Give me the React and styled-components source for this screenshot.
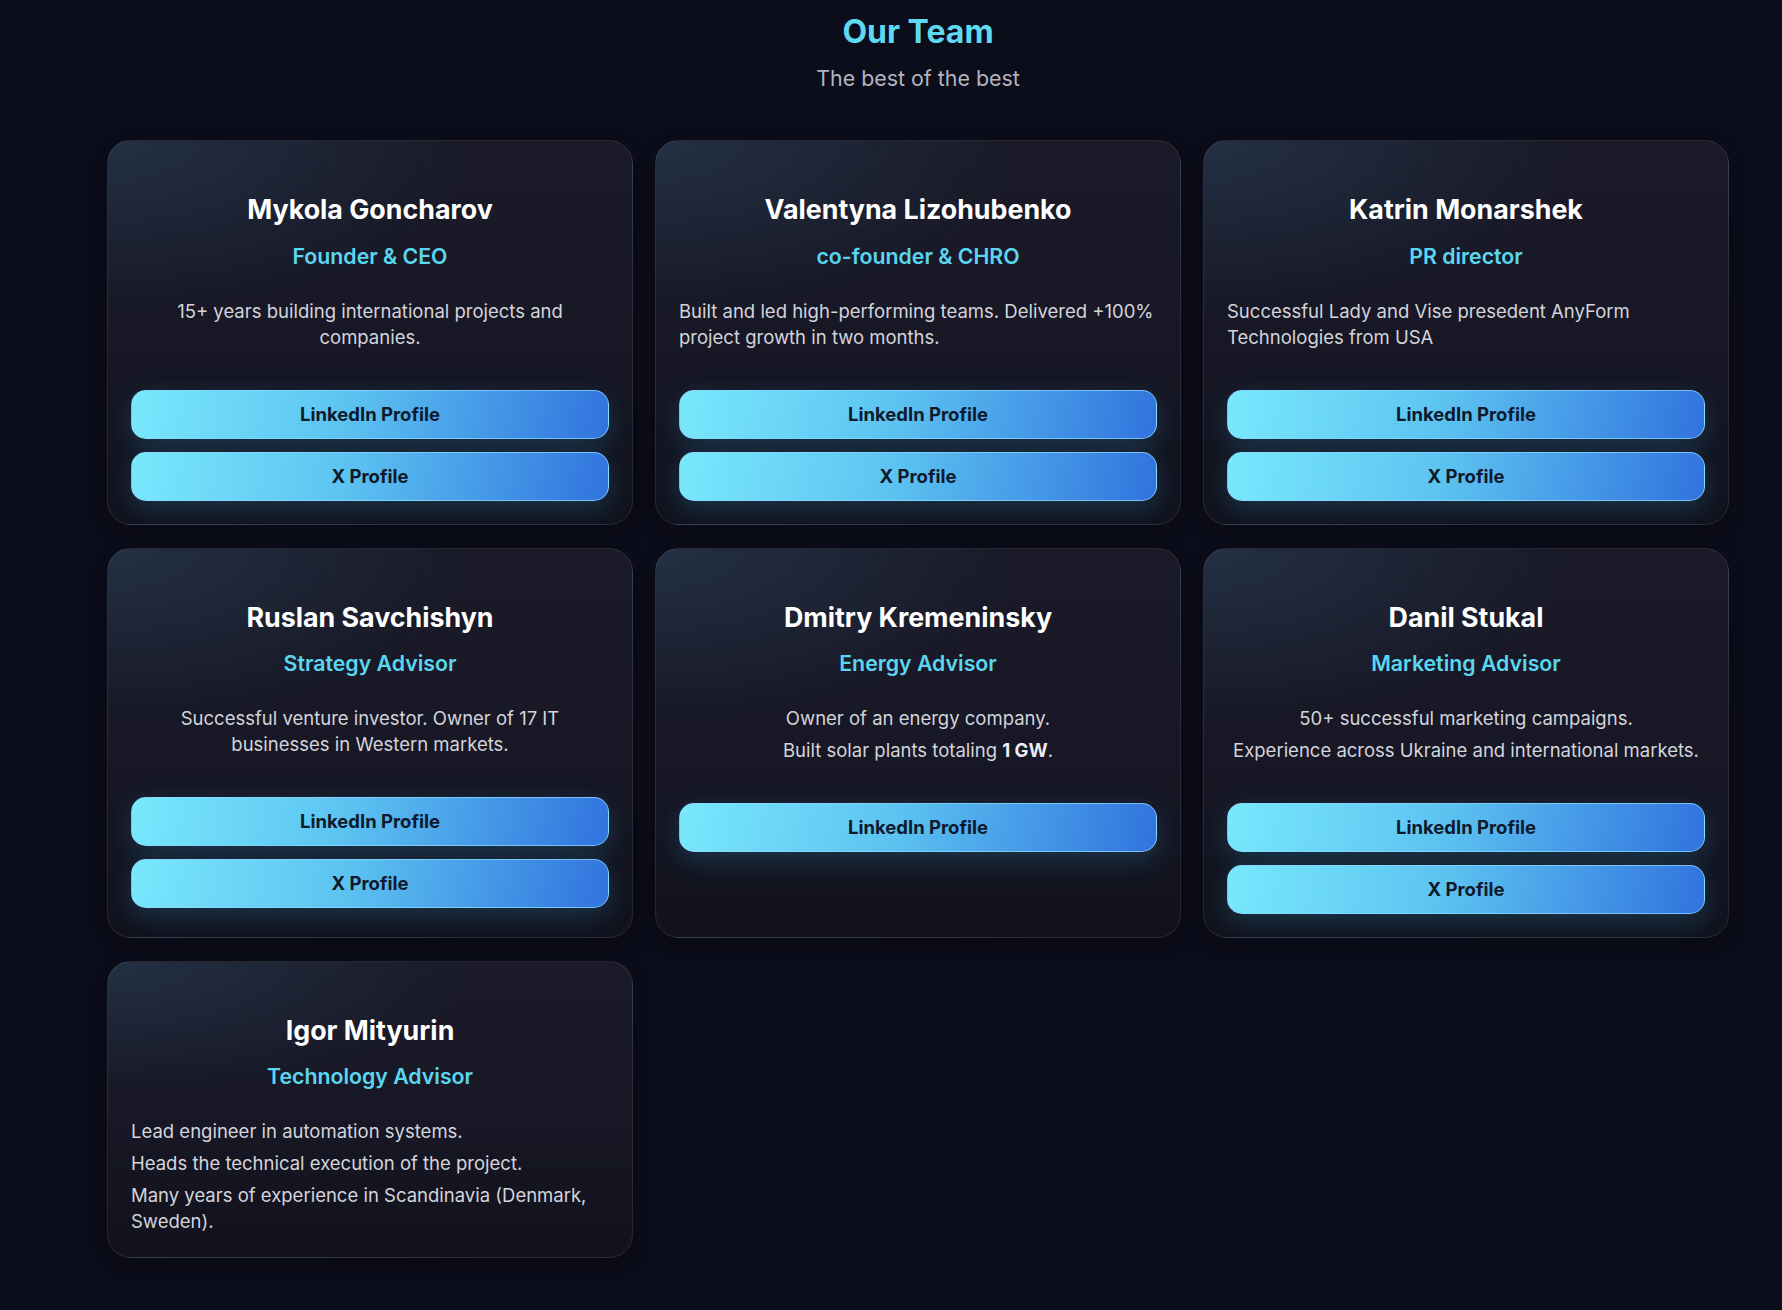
import React from "react";
import styled, { createGlobalStyle } from "styled-components";

const team = [
  {
    name: "Mykola Goncharov",
    role: "Founder & CEO",
    align: "center",
    about: ["15+ years building international projects and companies."],
    links: ["LinkedIn Profile", "X Profile"],
  },
  {
    name: "Valentyna Lizohubenko",
    role: "co-founder & CHRO",
    align: "left",
    about: [
      "Built and led high-performing teams. Delivered +100% project growth in two months.",
    ],
    links: ["LinkedIn Profile", "X Profile"],
  },
  {
    name: "Katrin Monarshek",
    role: "PR director",
    align: "left",
    about: ["Successful Lady and Vise presedent AnyForm Technologies from USA"],
    links: ["LinkedIn Profile", "X Profile"],
  },
  {
    name: "Ruslan Savchishyn",
    role: "Strategy Advisor",
    align: "center",
    about: [
      "Successful venture investor. Owner of 17 IT businesses in Western markets.",
    ],
    links: ["LinkedIn Profile", "X Profile"],
  },
  {
    name: "Dmitry Kremeninsky",
    role: "Energy Advisor",
    align: "center",
    about: [
      "Owner of an energy company.",
      <>
        Built solar plants totaling <b>1 GW</b>.
      </>,
    ],
    links: ["LinkedIn Profile"],
  },
  {
    name: "Danil Stukal",
    role: "Marketing Advisor",
    align: "center",
    about: [
      "50+ successful marketing campaigns.",
      "Experience across Ukraine and international markets.",
    ],
    links: ["LinkedIn Profile", "X Profile"],
  },
  {
    name: "Igor Mityurin",
    role: "Technology Advisor",
    align: "left",
    about: [
      "Lead engineer in automation systems.",
      "Heads the technical execution of the project.",
      "Many years of experience in Scandinavia (Denmark, Sweden).",
    ],
    links: [],
  },
];

const App = () => {
  return (
    <>
      <GlobalStyle />
      <Page>
        <Header>
          <Title>Our Team</Title>
          <Subtitle>The best of the best</Subtitle>
        </Header>
        <Grid>
          {team.map((member) => (
            <Card key={member.name}>
              <Name>{member.name}</Name>
              <Role>{member.role}</Role>
              <About $align={member.align}>
                {member.about.map((line, i) => (
                  <p key={i}>{line}</p>
                ))}
              </About>
              {member.links.length > 0 && (
                <Buttons>
                  {member.links.map((label) => (
                    <ProfileButton key={label} href="#">
                      {label}
                    </ProfileButton>
                  ))}
                </Buttons>
              )}
            </Card>
          ))}
        </Grid>
      </Page>
    </>
  );
};

export default App;

const GlobalStyle = createGlobalStyle`
  * {
    box-sizing: border-box;
  }
  body {
    margin: 0;
    background: #0c0d1a;
    font-family: Inter, "Noto Sans", sans-serif;
    color: #fff;
  }
`;

const Page = styled.div`
  min-height: 1310px;
  padding: 13px 0 40px 54px;
  display: flex;
  flex-direction: column;
  align-items: center;
`;

const Header = styled.header`
  text-align: center;
  margin-bottom: 46px;
`;

const Title = styled.h1`
  margin: 0;
  font-size: 32px;
  line-height: 1.2;
  font-weight: 700;
  color: #5fd9f2;
`;

const Subtitle = styled.p`
  margin: 13px 0 0;
  font-size: 21.4px;
  line-height: 1.4;
  color: #b3b3bf;
`;

const Grid = styled.div`
  width: 1622px;
  display: grid;
  grid-template-columns: repeat(3, 1fr);
  column-gap: 22px;
  row-gap: 23px;
  align-items: stretch;
`;

const Card = styled.div`
  display: flex;
  flex-direction: column;
  padding: 52px 23px 23px;
  border-radius: 24px;
  border: 1px solid rgba(255, 255, 255, 0.09);
  background:
    radial-gradient(
      ellipse 70% 45% at 0% 0%,
      rgba(45, 75, 100, 0.45),
      rgba(45, 75, 100, 0) 100%
    ),
    linear-gradient(180deg, #1a1a28 0%, #171725 55%, #11121d 100%);
  box-shadow: 0 6px 20px rgba(0, 0, 0, 0.25);
`;

const Name = styled.h3`
  margin: 0;
  text-align: center;
  font-size: 26.8px;
  line-height: 1.2;
  font-weight: 700;
  color: #ffffff;
`;

const Role = styled.div`
  margin-top: 17px;
  text-align: center;
  font-size: 21.3px;
  line-height: 26px;
  font-weight: 600;
  color: #5ad6f0;
`;

const About = styled.div`
  margin-top: 29px;
  text-align: ${(props) => props.$align};
  font-size: 18.5px;
  line-height: 26px;
  color: #d4d4dc;

  p {
    margin: 0;
  }
  p + p {
    margin-top: 6px;
  }
  b {
    font-weight: 700;
    color: #ececf2;
  }
`;

const Buttons = styled.div`
  margin-top: 40px;
  display: flex;
  flex-direction: column;
  gap: 13px;
`;

const ProfileButton = styled.a`
  display: flex;
  align-items: center;
  justify-content: center;
  height: 49px;
  border-radius: 15px;
  border: 1px solid rgba(140, 215, 255, 0.75);
  background: linear-gradient(100deg, #79e8fc 0%, #5cc3f1 45%, #3173de 100%);
  box-shadow: 0 8px 26px rgba(56, 190, 240, 0.2);
  color: #0e1a2c;
  font-size: 18.5px;
  font-weight: 700;
  text-decoration: none;
`;
